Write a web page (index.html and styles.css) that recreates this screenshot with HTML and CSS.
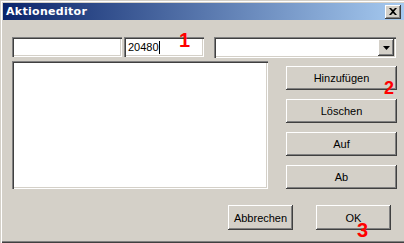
FILE: index.html
```html
<!DOCTYPE html>
<html>
<head>
<meta charset="utf-8">
<link rel="stylesheet" href="styles.css">
</head>
<body>
<div class="window">
  <div class="titlebar">
    <span class="title">Aktioneditor</span>
    <span class="close"><svg width="8" height="7" viewBox="0 0 8 7"><path d="M0 0h2l2 2 2-2h2L5 3.5 8 7H6L4 5 2 7H0l3-3.5z" fill="#000"/></svg></span>
  </div>
  <div class="content">
    <div class="toprow">
      <div class="field f1"></div>
      <div class="field f2"><span class="val">20480</span><span class="caret"></span></div>
      <div class="field combo"><span class="drop"><svg width="7" height="4" viewBox="0 0 7 4"><path d="M0 0h7L3.5 4z" fill="#000"/></svg></span></div>
    </div>
    <div class="midrow">
      <div class="listbox"></div>
      <div class="buttons">
        <div class="btn">Hinzufügen</div>
        <div class="btn">Löschen</div>
        <div class="btn">Auf</div>
        <div class="btn">Ab</div>
      </div>
    </div>
    <div class="bottomrow">
      <div class="btn cancel">Abbrechen</div>
      <div class="btn ok">OK</div>
    </div>
  </div>
  <span class="mark m1">1</span>
  <span class="mark m2">2</span>
  <span class="mark m3">3</span>
</div>
</body>
</html>
```

FILE: styles.css
```css
html, body {
  margin: 0;
  padding: 0;
  background: #e8e6f2;
}
.window {
  position: relative;
  width: 404px;
  height: 243px;
  box-sizing: border-box;
  background: #d4d0c8;
  padding: 3px 0 3px 3px;
  box-shadow: inset 1px 1px #d4d0c8, inset 2px 2px #ffffff, inset 0 -1px #404040, inset 0 -2px #808080;
  font-family: "Liberation Sans", Arial, sans-serif;
  font-size: 11px;
  color: #000;
  overflow: hidden;
}
.titlebar {
  height: 17px;
  background: linear-gradient(to right, #0a246a, #a6caf0);
  display: flex;
  align-items: center;
  justify-content: space-between;
  padding: 0 3px 0 3px;
}
.title {
  color: #fff;
  font-family: "DejaVu Sans", Verdana, sans-serif;
  font-weight: bold;
  font-size: 11px;
  letter-spacing: 0.3px;
}
.close {
  width: 16px;
  height: 14px;
  box-sizing: border-box;
  background: #d4d0c8;
  box-shadow: inset -1px -1px #404040, inset 1px 1px #ffffff, inset -2px -2px #808080;
  display: flex;
  align-items: center;
  justify-content: center;
}
.content {
  padding: 17px 0 0 9px;
}
.toprow {
  display: flex;
  height: 20px;
}
.field {
  box-sizing: border-box;
  background: #fff;
  box-shadow: inset 1px 1px #808080, inset 2px 2px #404040, inset -1px -1px #ffffff, inset -2px -2px #d4d0c8;
  height: 20px;
}
.f1 { width: 110px; }
.f2 {
  width: 80px;
  margin-left: 2px;
  display: flex;
  align-items: center;
  padding-left: 4px;
}
.caret {
  width: 1px;
  height: 13px;
  background: #000;
}
.combo {
  width: 182px;
  margin-left: 10px;
  height: 21px;
  display: flex;
  justify-content: flex-end;
  padding: 2px;
}
.drop {
  width: 16px;
  height: 17px;
  box-sizing: border-box;
  background: #d4d0c8;
  box-shadow: inset -1px -1px #404040, inset 1px 1px #ffffff, inset -2px -2px #808080;
  display: flex;
  align-items: center;
  justify-content: center;
}
.midrow {
  display: flex;
  margin-top: 4px;
}
.listbox {
  width: 256px;
  height: 128px;
  box-sizing: border-box;
  background: #fff;
  box-shadow: inset 1px 1px #808080, inset 2px 2px #404040, inset -1px -1px #ffffff, inset -2px -2px #d4d0c8;
}
.buttons {
  margin-left: 18px;
  padding-top: 5px;
  display: flex;
  flex-direction: column;
  gap: 9px;
}
.btn {
  box-sizing: border-box;
  width: 111px;
  height: 24px;
  background: #d4d0c8;
  box-shadow: inset -1px -1px #404040, inset 1px 1px #ffffff, inset -2px -2px #808080;
  display: flex;
  align-items: center;
  justify-content: center;
}
.bottomrow {
  display: flex;
  margin-top: 16px;
  padding-left: 216px;
}
.cancel { width: 65px; height: 25px; }
.ok { width: 75px; height: 25px; margin-left: 23px; }
.mark {
  position: absolute;
  color: #ff0000;
  font-family: "Liberation Sans", Arial, sans-serif;
  font-weight: bold;
  font-size: 20px;
  line-height: 16px;
}
.m1 { left: 179px; top: 32px; }
.m2 { left: 384px; top: 80px; font-size: 18px; }
.m3 { left: 357px; top: 222px; }
```
